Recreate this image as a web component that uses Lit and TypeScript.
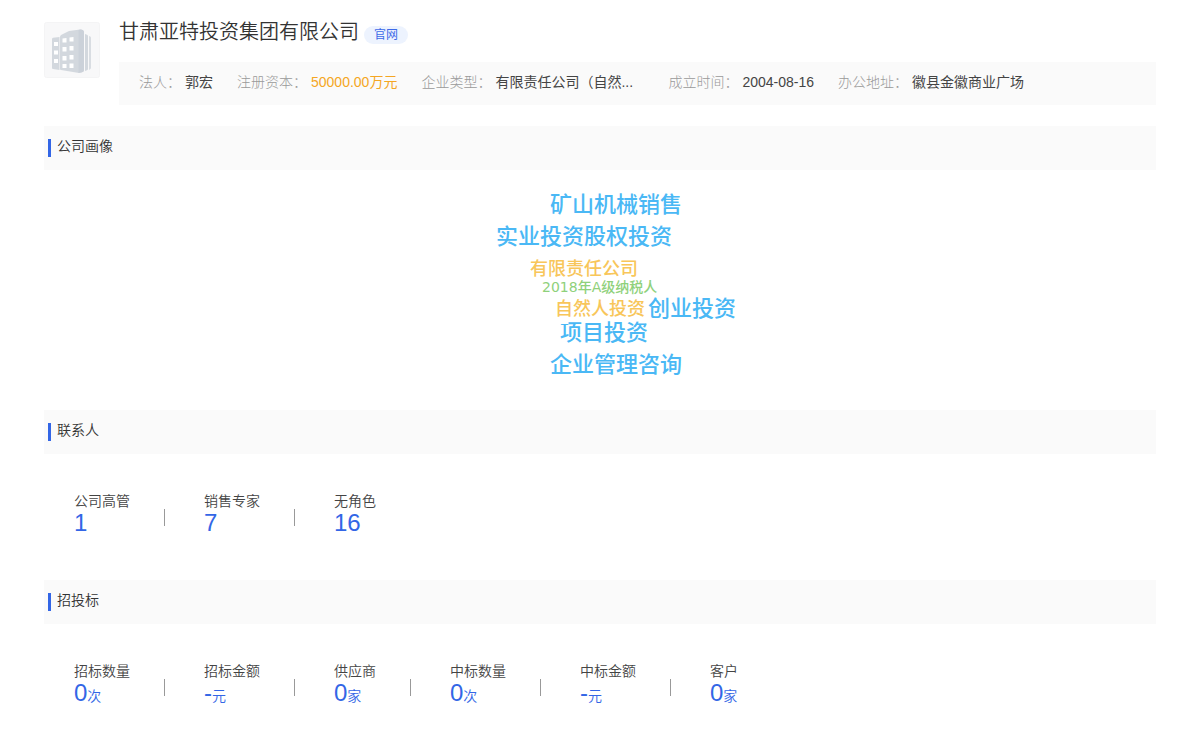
import { LitElement, html, css, nothing } from "lit";
import { customElement, property } from "lit/decorators.js";

interface Fact {
  label: string;
  value: string;
  tone?: string;
}

interface Stat {
  label: string;
  value: string;
  unit?: string;
}

interface Tag {
  text: string;
  kind: string;
  x: number;
  y: number;
}

const facts: Fact[] = [
  { label: "法人", value: "郭宏" },
  { label: "注册资本", value: "50000.00万元", tone: "money" },
  { label: "企业类型", value: "有限责任公司（自然...", tone: "wide" },
  { label: "成立时间", value: "2004-08-16" },
  { label: "办公地址", value: "徽县金徽商业广场" },
];

// Tag positions on the cloud canvas, measured from its top left corner.
const tags: Tag[] = [
  { text: "矿山机械销售", kind: "business", x: 54, y: 0 },
  { text: "实业投资股权投资", kind: "business", x: 0, y: 32 },
  { text: "有限责任公司", kind: "type", x: 34, y: 66 },
  { text: "2018年A级纳税人", kind: "rating", x: 46, y: 86 },
  { text: "自然人投资", kind: "type", x: 59, y: 106 },
  { text: "创业投资", kind: "business", x: 152, y: 104 },
  { text: "项目投资", kind: "business", x: 64, y: 128 },
  { text: "企业管理咨询", kind: "business", x: 54, y: 160 },
];

const contacts: Stat[] = [
  { label: "公司高管", value: "1" },
  { label: "销售专家", value: "7" },
  { label: "无角色", value: "16" },
];

const bids: Stat[] = [
  { label: "招标数量", value: "0", unit: "次" },
  { label: "招标金额", value: "-", unit: "元" },
  { label: "供应商", value: "0", unit: "家" },
  { label: "中标数量", value: "0", unit: "次" },
  { label: "中标金额", value: "-", unit: "元" },
  { label: "客户", value: "0", unit: "家" },
];

@customElement("section-title")
export class SectionTitle extends LitElement {
  static styles = css`
    :host {
      display: block;
    }
    .bar {
      display: flex;
      align-items: flex-start;
      gap: 6px;
      height: 44px;
      padding: 0 4px;
      box-sizing: border-box;
      background: #fafafa;
    }
    .mark {
      width: 3px;
      height: 18px;
      margin-top: 13px;
      background: #3366e6;
    }
    .text {
      margin: 0;
      font-size: 14px;
      font-weight: 350;
      line-height: 40px;
      color: #333;
    }
  `;

  @property() text = "";

  render() {
    return html`<div class="bar">
      <span class="mark"></span>
      <h2 class="text">${this.text}</h2>
    </div>`;
  }
}

@customElement("stat-row")
export class StatRow extends LitElement {
  static styles = css`
    :host {
      display: block;
    }
    .row {
      display: flex;
      flex-wrap: wrap;
      margin: 0;
      padding: 36px 30px 42px;
    }
    .item {
      display: flex;
      align-items: center;
    }
    .item:not(:last-child)::after {
      content: "";
      width: 1px;
      height: 17px;
      margin: 6px 39px 0 34px;
      background: #999;
    }
    .label {
      font-size: 14px;
      line-height: 22px;
      color: #444;
    }
    .value {
      margin: 0;
      font-size: 24px;
      line-height: 26px;
      height: 26px;
      margin-top: -2px;
      padding-bottom: 2px;
      color: #3366e6;
    }
    .unit {
      font-size: 14px;
    }
  `;

  @property({ attribute: false }) items: Stat[] = [];

  render() {
    return html`<dl class="row">
      ${this.items.map(
        (s) => html`<div class="item">
          <div>
            <dt class="label">${s.label}</dt>
            <dd class="value">${s.value}${s.unit ? html`<span class="unit">${s.unit}</span>` : nothing}</dd>
          </div>
        </div>`,
      )}
    </dl>`;
  }
}

@customElement("app-root")
export class AppRoot extends LitElement {
  static styles = css`
    :host {
      display: block;
      padding: 20px 44px 24px;
      background: #fff;
      color: #333;
      font-family: "Liberation Sans", "Noto Sans CJK SC", sans-serif;
      font-size: 14px;
      font-weight: 350;
    }
    .head {
      display: flex;
      gap: 19px;
    }
    .logo {
      flex: none;
      width: 56px;
      height: 56px;
      margin-top: 2px;
    }
    .main {
      flex: 1;
      min-width: 0;
    }
    .name-line {
      display: flex;
      align-items: flex-end;
      gap: 5px;
      height: 24px;
    }
    .name {
      margin: 0;
      font-size: 20px;
      font-weight: 350;
      line-height: 24px;
      color: #333;
    }
    .site {
      padding: 0 10px;
      border-radius: 9px;
      background: #edf3fe;
      color: #3e6ae8;
      font-size: 12px;
      font-weight: 400;
      line-height: 18px;
      text-decoration: none;
    }
    .facts {
      display: flex;
      flex-wrap: wrap;
      gap: 0 24px;
      margin: 18px 0 0;
      padding: 0 20px 3px;
      background: #fafafa;
      line-height: 40px;
    }
    .fact {
      display: flex;
      gap: 4px;
    }
    .fact-label {
      font-weight: 300;
      color: #999;
    }
    .fact-value {
      margin: 0;
      white-space: nowrap;
      font-weight: 400;
      color: #444;
    }
    .wide {
      min-width: 149px;
    }
    .money {
      color: #f5a623;
    }
    .portrait {
      margin-top: 21px;
    }
    .cloud-area {
      display: flex;
      justify-content: center;
      padding: 22px 0 30px;
    }
    .cloud {
      position: relative;
      width: 208px;
      height: 188px;
      margin: 0;
      padding: 0;
      list-style: none;
      font-family: "DejaVu Sans", "Noto Sans CJK SC", sans-serif;
      font-weight: 500;
    }
    .tag {
      position: absolute;
      white-space: nowrap;
    }
    .business {
      font-size: 22px;
      line-height: 26px;
      color: #4ab8f5;
    }
    .type {
      font-size: 18px;
      line-height: 22px;
      color: #f8c65a;
    }
    .rating {
      font-size: 14px;
      line-height: 18px;
      color: #8fd17b;
    }
  `;

  render() {
    return html`
      <header class="head">
        <svg class="logo" viewBox="0 0 56 56" aria-hidden="true">
          <rect x=".5" y=".5" width="55" height="55" rx="2" fill="#f8f8f9" stroke="#f4f4f5" />
          <path d="M8 17q0-1 1-1.200L15.500 15v33L9 47q-1 0-1-1z" fill="#d3d8de" />
          <path d="M16 15q0-1.500 1.500-2.200L25 9 36 7.500q4 0 4 3V48q0 2-2 2.300l-3 .7-18-3q-1 0-1-1z" fill="#d3d8de" />
          <path d="M34.500 8l2-.4q3.500 0 3.500 3V48q0 2-2 2.300l-3.500.6z" fill="#cbd1d9" />
          <path d="M41 12l2 .7q1 .3 1 1.300v33q0 1-1 1.300l-2 .7z" fill="#d3d8de" />
          <path d="M45 14l1.300.4q.7.300.7 1.300v30q0 1-.7 1.300L45 48z" fill="#d9dde2" />
          <g fill="#fff">
            <path d="M10 20h4v4h-4zM10 28.500h4v4h-4zM10 37h4v4h-4z" />
            <path d="M18.500 16.500l4-.5v4.500h-4zM18.500 25h4v4.500h-4zM18.500 34h4v4.500h-4zM18.500 42h4v4h-4z" />
            <path d="M25.500 15.500l4-.5v4.500h-4zM25.500 24h4v4.500h-4zM25.500 33h4v4.500h-4zM25.500 41.500h4V46h-4z" />
          </g>
        </svg>
        <div class="main">
          <div class="name-line">
            <h1 class="name">甘肃亚特投资集团有限公司</h1>
            <a class="site" href="#">官网</a>
          </div>
          <dl class="facts">
            ${facts.map(
              (f) => html`<div class="fact">
                <dt class="fact-label">${f.label}：</dt>
                <dd class="fact-value ${f.tone ?? ""}">${f.value}</dd>
              </div>`,
            )}
          </dl>
        </div>
      </header>

      <section class="portrait">
        <section-title text="公司画像"></section-title>
        <div class="cloud-area">
          <ul class="cloud">
            ${tags.map(
              (t) => html`<li class="tag ${t.kind}" style="left:${t.x}px;top:${t.y}px">${t.text}</li>`,
            )}
          </ul>
        </div>
      </section>

      <section>
        <section-title text="联系人"></section-title>
        <stat-row .items=${contacts}></stat-row>
      </section>

      <section>
        <section-title text="招投标"></section-title>
        <stat-row .items=${bids}></stat-row>
      </section>
    `;
  }
}
